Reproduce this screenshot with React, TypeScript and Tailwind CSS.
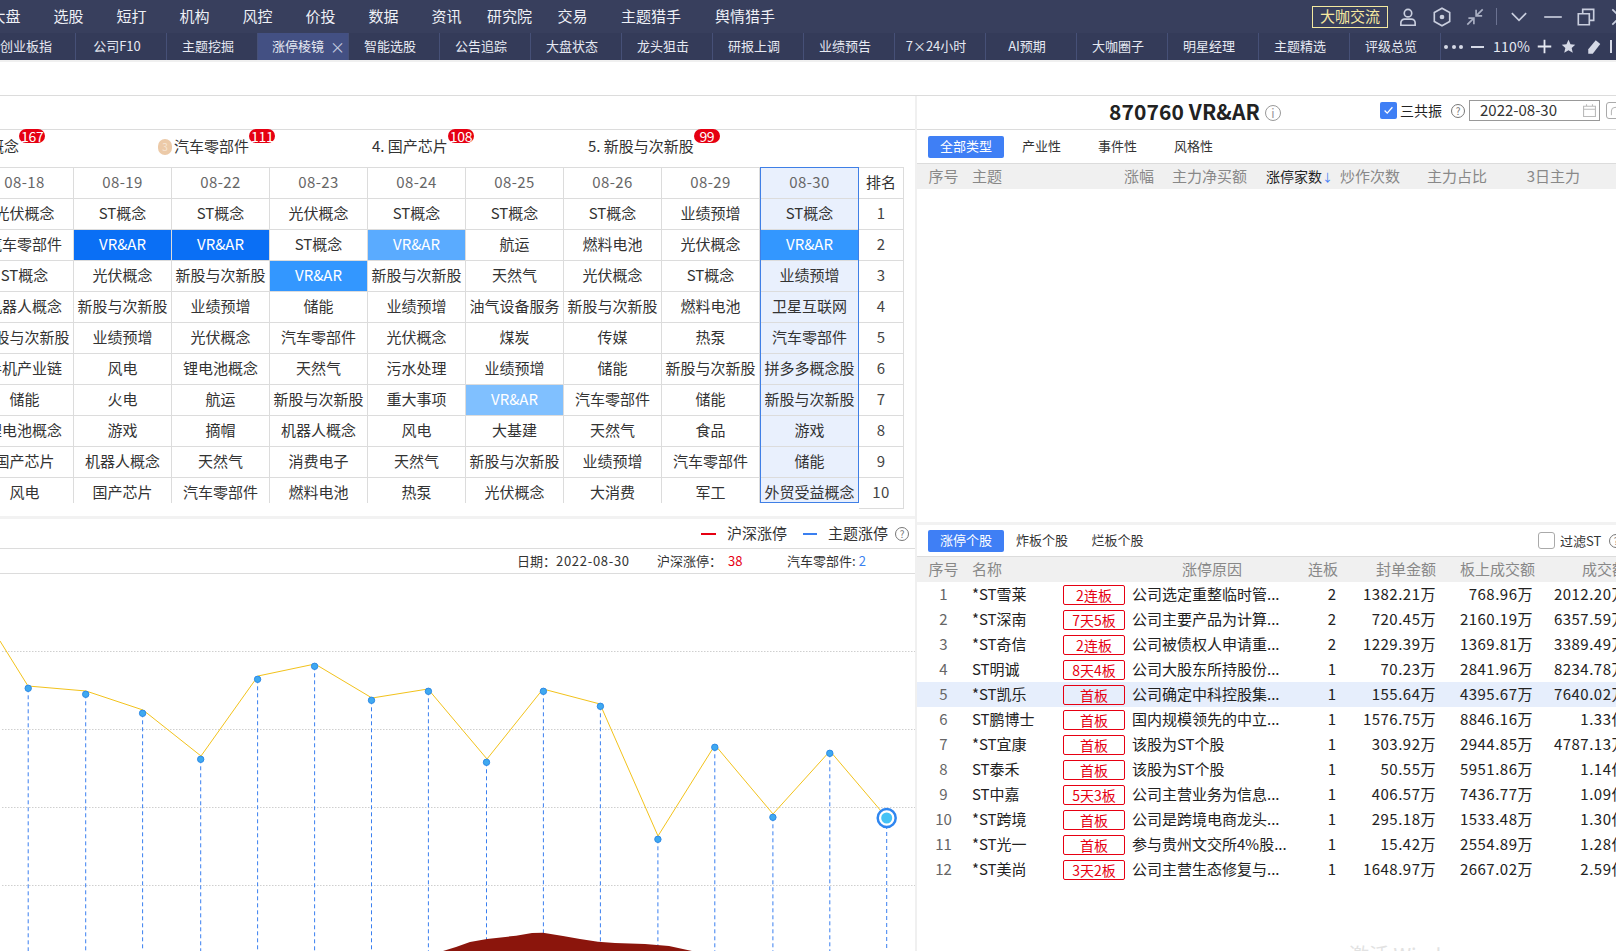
import React from "react";

type Cell = string | [string, string];

const DARK = "bg-[#0a6ff5]";
const MID = "bg-[#3397ff]";
const LIGHT = "bg-[#5aabff]";
const PALE = "bg-[#80c0ff]";

const COLUMNS: { date: string; cells: Cell[] }[] = [
  { date: "08-18", cells: ["光伏概念", "汽车零部件", "ST概念", "机器人概念", "新股与次新股", "手机产业链", "储能", "锂电池概念", "国产芯片", "风电"] },
  { date: "08-19", cells: ["ST概念", ["VR&AR", DARK], "光伏概念", "新股与次新股", "业绩预增", "风电", "火电", "游戏", "机器人概念", "国产芯片"] },
  { date: "08-22", cells: ["ST概念", ["VR&AR", DARK], "新股与次新股", "业绩预增", "光伏概念", "锂电池概念", "航运", "摘帽", "天然气", "汽车零部件"] },
  { date: "08-23", cells: ["光伏概念", "ST概念", ["VR&AR", MID], "储能", "汽车零部件", "天然气", "新股与次新股", "机器人概念", "消费电子", "燃料电池"] },
  { date: "08-24", cells: ["ST概念", ["VR&AR", LIGHT], "新股与次新股", "业绩预增", "光伏概念", "污水处理", "重大事项", "风电", "天然气", "热泵"] },
  { date: "08-25", cells: ["ST概念", "航运", "天然气", "油气设备服务", "煤炭", "业绩预增", ["VR&AR", PALE], "大基建", "新股与次新股", "光伏概念"] },
  { date: "08-26", cells: ["ST概念", "燃料电池", "光伏概念", "新股与次新股", "传媒", "储能", "汽车零部件", "天然气", "业绩预增", "大消费"] },
  { date: "08-29", cells: ["业绩预增", "光伏概念", "ST概念", "燃料电池", "热泵", "新股与次新股", "储能", "食品", "汽车零部件", "军工"] },
];
const LAST = { date: "08-30", cells: ["ST概念", ["VR&AR", MID], "业绩预增", "卫星互联网", "汽车零部件", "拼多多概念股", "新股与次新股", "游戏", "储能", "外贸受益概念"] as Cell[] };

const MENU: [string, string][] = [
  ["大盘", "w-[63px] -ml-[26px]"], ["选股", "w-[63px]"], ["短打", "w-[63px]"], ["机构", "w-[63px]"], ["风控", "w-[63px]"],
  ["价投", "w-[63px]"], ["数据", "w-[63px]"], ["资讯", "w-[63px]"], ["研究院", "w-[63px]"], ["交易", "w-[63px]"],
  ["主题猎手", "w-[94px]"], ["舆情猎手", "w-[94px]"],
];

const TABS = ["创业板指", "公司F10", "主题挖掘", "涨停棱镜", "智能选股", "公告追踪", "大盘状态", "龙头狙击", "研报上调", "业绩预告", "7×24小时", "AI预期", "大咖圈子", "明星经理", "主题精选", "评级总览"];

const STOCKS = [
  ["1", "*ST雪莱", "2连板", "公司选定重整临时管...", "2", "1382.21万", "768.96万", "2012.20万"],
  ["2", "*ST深南", "7天5板", "公司主要产品为计算...", "2", "720.45万", "2160.19万", "6357.59万"],
  ["3", "*ST奇信", "2连板", "公司被债权人申请重...", "2", "1229.39万", "1369.81万", "3389.49万"],
  ["4", "ST明诚", "8天4板", "公司大股东所持股份...", "1", "70.23万", "2841.96万", "8234.78万"],
  ["5", "*ST凯乐", "首板", "公司确定中科控股集...", "1", "155.64万", "4395.67万", "7640.02万"],
  ["6", "ST鹏博士", "首板", "国内规模领先的中立...", "1", "1576.75万", "8846.16万", "1.33亿"],
  ["7", "*ST宜康", "首板", "该股为ST个股", "1", "303.92万", "2944.85万", "4787.13万"],
  ["8", "ST泰禾", "首板", "该股为ST个股", "1", "50.55万", "5951.86万", "1.14亿"],
  ["9", "ST中嘉", "5天3板", "公司主营业务为信息...", "1", "406.57万", "7436.77万", "1.09亿"],
  ["10", "*ST跨境", "首板", "公司是跨境电商龙头...", "1", "295.18万", "1533.48万", "1.30亿"],
  ["11", "*ST光一", "首板", "参与贵州文交所4%股...", "1", "15.42万", "2554.89万", "1.28亿"],
  ["12", "*ST美尚", "3天2板", "公司主营生态修复与...", "1", "1648.97万", "2667.02万", "2.59亿"],
];

const DOTS = [
  [28.2, 688.3], [85.7, 694.3], [142.6, 713.3], [200.7, 759.3], [257.6, 679.3], [314.6, 666.3], [371.5, 700.3], [428.4, 691.3],
  [486.5, 762.3], [543.4, 691.3], [600.4, 706.3], [657.9, 839.3], [714.8, 747.3], [772.9, 817.3], [829.8, 753.3],
];
const LINE = "0,641 28,686 86,691 143,710 201,756 258,676 315,664 372,698 428,689 487,759 543,689 600,704 658,836 715,745 773,814 830,751 887,818";
const AREA = "443,951 456,947 470,942 487,939 516,935.7 532,933 543,932.7 563,936 580,939 598,941.7 615,943 645,944 669,946 692,951";

const Svg = ({ children, className = "" }: { children: React.ReactNode; className?: string }) => (
  <svg viewBox="0 0 20 20" fill="none" stroke="currentColor" strokeWidth="1.5" className={`shrink-0 ${className}`}>
    {children}
  </svg>
);

const Help = ({ className = "" }: { className?: string }) => (
  <span className={`flex h-[14px] w-[14px] shrink-0 items-center justify-center rounded-full border border-[#777] text-[10px] leading-none text-[#777] ${className}`}>?</span>
);

function TopBar() {
  return (
    <div className="flex h-[33px] items-center bg-[#383f5d] text-[15px] text-[#eef0f6]">
      {MENU.map(([label, width]) => (
        <div key={label} className={`shrink-0 text-center ${width}`}>{label}</div>
      ))}
      <div className="ml-[-91px] flex grow items-center justify-end text-[#c9cede]">
        <div className="mr-[9px] flex h-[22px] w-[76px] shrink-0 items-center justify-center border border-[#f3e9a0] text-[#f6e9a0]">大咖交流</div>
        <Svg className="mr-[12px] h-[22px] w-[22px]">
          <circle cx="10" cy="6.5" r="3.4" />
          <path d="M3.5 17.5v-2.2c0-2 1.6-3.4 3.4-3.4h6.2c1.8 0 3.4 1.4 3.4 3.4v2.2z" />
        </Svg>
        <Svg className="mr-[11px] h-[22px] w-[22px]">
          <path d="M10 2l7 4v8l-7 4-7-4V6z" />
          <circle cx="10" cy="10" r="1.4" fill="currentColor" />
        </Svg>
        <Svg className="mr-[10px] h-[22px] w-[22px] text-[#aab0c4]">
          <path d="M17 3l-5.5 5.5M11 3.5V9h5.5M3 17l5.5-5.5M4 11h5v5.5" />
        </Svg>
        <div className="mr-[11px] h-[17px] w-px shrink-0 bg-[#6b7291]" />
        <Svg className="mr-[12px] h-[22px] w-[22px]"><path d="M3.5 6.5L10 13l6.500-6.500" /></Svg>
        <Svg className="mr-[11px] h-[22px] w-[22px]"><path d="M2 10h16" /></Svg>
        <Svg className="mr-[12px] h-[22px] w-[22px]"><path d="M3 7h10v10H3zM7 7V3h10v10h-4" /></Svg>
        <Svg className="mr-[-15px] h-[22px] w-[22px]"><path d="M3 3l14 14M17 3L3 17" /></Svg>
      </div>
    </div>
  );
}

function TabBar() {
  return (
    <div className="flex h-[27px] items-center bg-[#343b59] text-[13px] text-[#e6e9f2]">
      {TABS.map((tab, i) => (
        <div
          key={tab}
          className={`relative flex h-full w-[91px] shrink-0 items-center justify-center border-r border-[#465077] pb-[1px] ${i === 0 ? "-ml-[15px]" : ""} ${i === 3 ? "justify-start bg-[#435083] pl-[14px]" : "pr-[8px]"}`}
        >
          {tab}
          {i === 3 && <span className="absolute right-[3px] text-[15px] leading-none text-[#c5cbe0]">×</span>}
        </div>
      ))}
      <div className="flex grow items-center text-[#e6e9f2]">
        <div className="ml-[3px] flex w-[19px] justify-between">
          <span className="h-[4px] w-[4px] rounded-full bg-[#d5d9e6]" />
          <span className="h-[4px] w-[4px] rounded-full bg-[#d5d9e6]" />
          <span className="h-[4px] w-[4px] rounded-full bg-[#d5d9e6]" />
        </div>
        <div className="ml-[8px] h-[2px] w-[13px] bg-[#d5d9e6]" />
        <span className="ml-[9px] w-[36px] text-[14px] tracking-[0.2px]">110%</span>
        <Svg className="ml-[8px] h-[15px] w-[15px]"><path d="M10 1v18M1 10h18" strokeWidth="2.400" /></Svg>
        <svg viewBox="0 0 20 20" className="ml-[9px] h-[15px] w-[15px] shrink-0 fill-[#d5d9e6]"><path d="M10 1l2.700 6 6.300.6-4.800 4.300 1.500 6.400L10 15l-5.700 3.300 1.500-6.400L1 7.600 7.300 7z" /></svg>
        <svg viewBox="0 0 20 20" className="ml-[10px] h-[16px] w-[15px] shrink-0 fill-[#d5d9e6]"><path d="M13 1l6 5L9 19H3v-6z" /></svg>
        <div className="ml-[9px] h-[13px] w-[2px] shrink-0 bg-[#d5d9e6]" />
      </div>
    </div>
  );
}

function Badge({ children }: { children: React.ReactNode }) {
  return (
    <span className="absolute left-full top-[-6px] flex h-[14px] min-w-[26px] items-center justify-center rounded-full bg-[#e60012] px-[2px] text-[14px] leading-none tracking-[-0.3px] text-white">
      {children}
    </span>
  );
}

function RankRow() {
  return (
    <div className="flex h-[37px] items-center text-[15px] text-[#333]">
      <div className="relative ml-[-11px] w-[169px] pb-[4px]"><span className="relative">概念<Badge>167</Badge></span></div>
      <div className="flex w-[214px] items-center pb-[4px]">
        <span className="mr-[2px] flex h-[16px] w-[14px] items-center justify-center rounded-full bg-[#eccaa8] text-[10px] leading-none text-[#f7e6d5]">3</span>
        <span className="relative">汽车零部件<Badge>111</Badge></span>
      </div>
      <div className="w-[216px] pb-[4px]"><span className="relative">4. 国产芯片<Badge>108</Badge></span></div>
      <div className="pb-[4px]"><span className="relative">5. 新股与次新股<Badge>99</Badge></span></div>
    </div>
  );
}

function ThemeCell({ cell }: { cell: Cell }) {
  const label = typeof cell === "string" ? cell : cell[0];
  const fill = typeof cell === "string" ? "" : `${cell[1]} text-white`;
  return (
    <div className={`flex h-[31px] items-center justify-center overflow-hidden whitespace-nowrap border-t border-[#dcdcdc] pb-[1px] ${fill}`}>
      {label}
    </div>
  );
}

function ThemeTable() {
  return (
    <div className="flex h-[340px] items-start text-[15px] text-[#333]">
      {COLUMNS.map((col, i) => (
        <div key={col.date} className={`h-[336px] w-[98px] shrink-0 overflow-hidden border-r border-[#dcdcdc] ${i === 0 ? "-ml-[24px]" : ""}`}>
          <div className="flex h-[31px] items-center justify-center border-t border-[#dcdcdc] pb-[1px] tracking-[0.4px] text-[#666]">{col.date}</div>
          {col.cells.map((cell, j) => (
            <ThemeCell key={j} cell={cell} />
          ))}
        </div>
      ))}
      <div className="h-[336px] w-[99px] shrink-0 overflow-hidden border border-[#3f7fe6] bg-[#e9f0fd]">
        <div className="flex h-[30px] items-center justify-center pb-[1px] tracking-[0.4px] text-[#666]">{LAST.date}</div>
        {LAST.cells.map((cell, j) => (
          <ThemeCell key={j} cell={cell} />
        ))}
      </div>
      <div className="w-[45px] shrink-0 border-b border-r border-[#dcdcdc]">
        <div className="flex h-[31px] items-center justify-center border-t border-[#dcdcdc] pb-[1px]">排名</div>
        {Array.from({ length: 10 }, (_, i) => (
          <div key={i} className="flex h-[31px] items-center justify-center border-t border-[#dcdcdc] pb-[1px] tracking-[0.4px] text-[#444]">{i + 1}</div>
        ))}
      </div>
    </div>
  );
}

function TrendChart() {
  return (
    <svg viewBox="0 574 915 377" className="block h-[377px] w-[915px]">
      {[651.5, 729.5, 807.5, 885.5].map((y) => (
        <line key={y} x1="2" x2="915" y1={y} y2={y} stroke="#cfcfcf" strokeDasharray="1.500 1.500" />
      ))}
      {[...DOTS, [886.7, 818]].map(([x, y]) => (
        <line key={x} x1={x} x2={x} y1={y} y2="951" stroke="#3a7ff0" strokeDasharray="4 3" />
      ))}
      <polygon points={AREA} fill="#8b150c" />
      <polyline points={LINE} fill="none" stroke="#f2c21b" />
      {DOTS.map(([x, y]) => (
        <circle key={x} cx={x} cy={y} r="3.200" fill="#3fa9f0" stroke="#2f8ae6" />
      ))}
      <circle cx="886.7" cy="818" r="9" fill="#fff" stroke="#2f86f0" strokeWidth="2.500" />
      <circle cx="886.7" cy="818" r="5.500" fill="#45c2f5" />
    </svg>
  );
}

function LeftPanel() {
  return (
    <div className="w-[915px] shrink-0 overflow-hidden">
      <div className="h-[34px] border-b border-[#dcdcdc]" />
      <RankRow />
      <ThemeTable />
      <div className="h-[9px]" />
      <div className="h-[3px] bg-[#f2f2f2]" />
      <div className="flex h-[30px] items-center justify-end border-b border-[#dcdcdc] pr-[6px] text-[15px] text-[#333]">
        <span className="h-[2px] w-[15px] bg-[#e60012]" />
        <span className="ml-[11px]">沪深涨停</span>
        <span className="ml-[16px] h-[2px] w-[14px] bg-[#3a7ff0]" />
        <span className="ml-[11px]">主题涨停</span>
        <Help className="ml-[7px]" />
      </div>
      <div className="flex h-[25px] items-center border-b border-[#dcdcdc] pl-[517px] text-[13px] text-[#333]">
        <span className="w-[140px]">日期：<span className="tracking-[0.7px]">2022-08-30</span></span>
        <span className="w-[71px]">沪深涨停：</span>
        <span className="w-[59px] text-[#e60012]">38</span>
        <span>汽车零部件:</span>
        <span className="ml-[3px] text-[#3a7ff0]">2</span>
      </div>
      <TrendChart />
    </div>
  );
}

function SegButton({ children, active = false, className = "" }: { children: React.ReactNode; active?: boolean; className?: string }) {
  return (
    <div className={`flex h-[22px] shrink-0 items-center justify-center whitespace-nowrap rounded-[2px] pb-[1px] text-[13px] ${active ? "bg-[#3f7ff5] text-white" : "text-[#333]"} ${className}`}>
      {children}
    </div>
  );
}

function ThemeList() {
  return (
    <div className="h-[429px] border-b-[3px] border-[#f2f2f2]">
      <div className="flex h-[34px] items-center border-b border-[#dcdcdc] pb-[2px] pl-[192px]">
        <span className="whitespace-nowrap text-[21px] font-bold leading-none tracking-[0.1px] text-[#222]">870760 VR&amp;AR</span>
        <span className="ml-[5px] mt-[2px] flex h-[16px] w-[16px] items-center justify-center rounded-full border border-[#999] text-[12px] leading-none text-[#999]">i</span>
        <div className="absolute left-[1380px] top-[100px] flex items-center whitespace-nowrap text-[14px] text-[#222]">
          <span className="flex h-[17px] w-[17px] shrink-0 items-center justify-center rounded-[2px] bg-[#3f7ff5] text-white">
            <Svg className="h-[13px] w-[13px]"><path d="M4 10l4 4 8-9" strokeWidth="2" /></Svg>
          </span>
          <span className="ml-[3px]">三共振</span>
          <Help className="ml-[9px]" />
          <div className="ml-[4px] flex h-[21px] w-[131px] shrink-0 items-center border border-[#999] pl-[10px] text-[15px] text-[#333]">
            2022-08-30
            <Svg className="ml-[24px] h-[17px] w-[17px] text-[#bbb]"><path d="M3 5h14v12H3zM3 8.500h14M6.500 2.500V5M13.500 2.500V5" strokeWidth="1.300" /></Svg>
          </div>
          <span className="ml-[6px] flex h-[17px] w-[20px] shrink-0 items-center rounded-[3px] border border-[#aaa] pl-[2px] text-[#aaa]">
            <Svg className="h-[12px] w-[12px]"><path d="M4 17V10a6 6 0 0 1 6-6h8" /></Svg>
          </span>
        </div>
      </div>
      <div className="flex h-[34px] items-center border-b border-[#dcdcdc] pl-[11px]">
        <SegButton active className="w-[76px]">全部类型</SegButton>
        <SegButton className="ml-[18px] w-[39px]">产业性</SegButton>
        <SegButton className="ml-[37px] w-[39px]">事件性</SegButton>
        <SegButton className="ml-[37px] w-[39px]">风格性</SegButton>
      </div>
      <div className="grid h-[25px] grid-cols-[53px_100px_84px_93px_83px_70px_87px_93px] items-center whitespace-nowrap bg-[#f0f0f0] text-[15px] text-[#888]">
        <div className="text-center">序号</div>
        <div className="pl-[2px]">主题</div>
        <div className="text-right">涨幅</div>
        <div className="text-right">主力净买额</div>
        <div className="pr-[2px] text-right text-[14px] text-[#222]">涨停家数<span className="inline-block w-[6px] text-[11px] leading-none text-[#3f7ff5]">↓</span></div>
        <div className="text-right">炒作次数</div>
        <div className="text-right">主力占比</div>
        <div className="text-right">3日主力</div>
      </div>
    </div>
  );
}

function StockList() {
  const cols = "grid grid-cols-[53px_93px_62px_175px_38px_98px_99px_92px] items-center whitespace-nowrap";
  return (
    <div>
      <div className="flex h-[32px] items-center border-b border-[#dcdcdc] pl-[11px]">
        <SegButton active className="w-[76px]">涨停个股</SegButton>
        <SegButton className="ml-[12px] w-[52px]">炸板个股</SegButton>
        <SegButton className="ml-[23px] w-[53px]">烂板个股</SegButton>
        <div className="ml-[394px] flex shrink-0 items-center whitespace-nowrap text-[13px] text-[#333]">
          <span className="h-[17px] w-[17px] shrink-0 rounded-[3px] border border-[#aaa]" />
          <span className="ml-[5px] w-[43px]">过滤ST</span>
          <Help className="ml-[6px]" />
        </div>
      </div>
      <div className={`${cols} h-[25px] bg-[#f0f0f0] text-[15px] text-[#888]`}>
        <div className="text-center">序号</div>
        <div className="pl-[2px]">名称</div>
        <div />
        <div className="pr-[1px] text-center">涨停原因</div>
        <div className="text-right">连板</div>
        <div className="text-right">封单金额</div>
        <div className="text-right">板上成交额</div>
        <div className="text-right">成交额</div>
      </div>
      {STOCKS.map((s) => (
        <div key={s[0]} className={`${cols} h-[25px] text-[15px] text-[#222] ${s[0] === "5" ? "bg-[#e6eefc]" : ""}`}>
          <div className="text-center text-[#666]">{s[0]}</div>
          <div className="pl-[2px]">{s[1]}</div>
          <div className="flex h-[20px] w-[62px] items-center justify-center rounded-[2px] border border-[#e60012] pt-[1px] text-[14px] text-[#e60012]">{s[2]}</div>
          <div className="pl-[7px]">{s[3]}</div>
          <div className="pr-[2px] text-right">{s[4]}</div>
          <div className="text-right tracking-[0.5px]">{s[5]}</div>
          <div className="pr-[2px] text-right tracking-[0.5px]">{s[6]}</div>
          <div className="text-right tracking-[0.5px]">{s[7]}</div>
        </div>
      ))}
    </div>
  );
}

export default function App() {
  return (
    <div className="relative h-[951px] w-[1616px] overflow-hidden bg-white font-['Noto_Sans_CJK_SC','Liberation_Sans',sans-serif]">
      <TopBar />
      <TabBar />
      <div className="h-[2px] bg-[#f0f0f0]" />
      <div className="h-[34px] border-b border-[#dcdcdc]" />
      <div className="flex">
        <LeftPanel />
        <div className="w-[2px] shrink-0 bg-[#f0f0f0]" />
        <div className="w-[699px] shrink-0">
          <ThemeList />
          <StockList />
        </div>
      </div>
      <div className="absolute left-[1349px] top-[940px] text-[20px] text-[#e2e2e2]">激活 Windows</div>
    </div>
  );
}
